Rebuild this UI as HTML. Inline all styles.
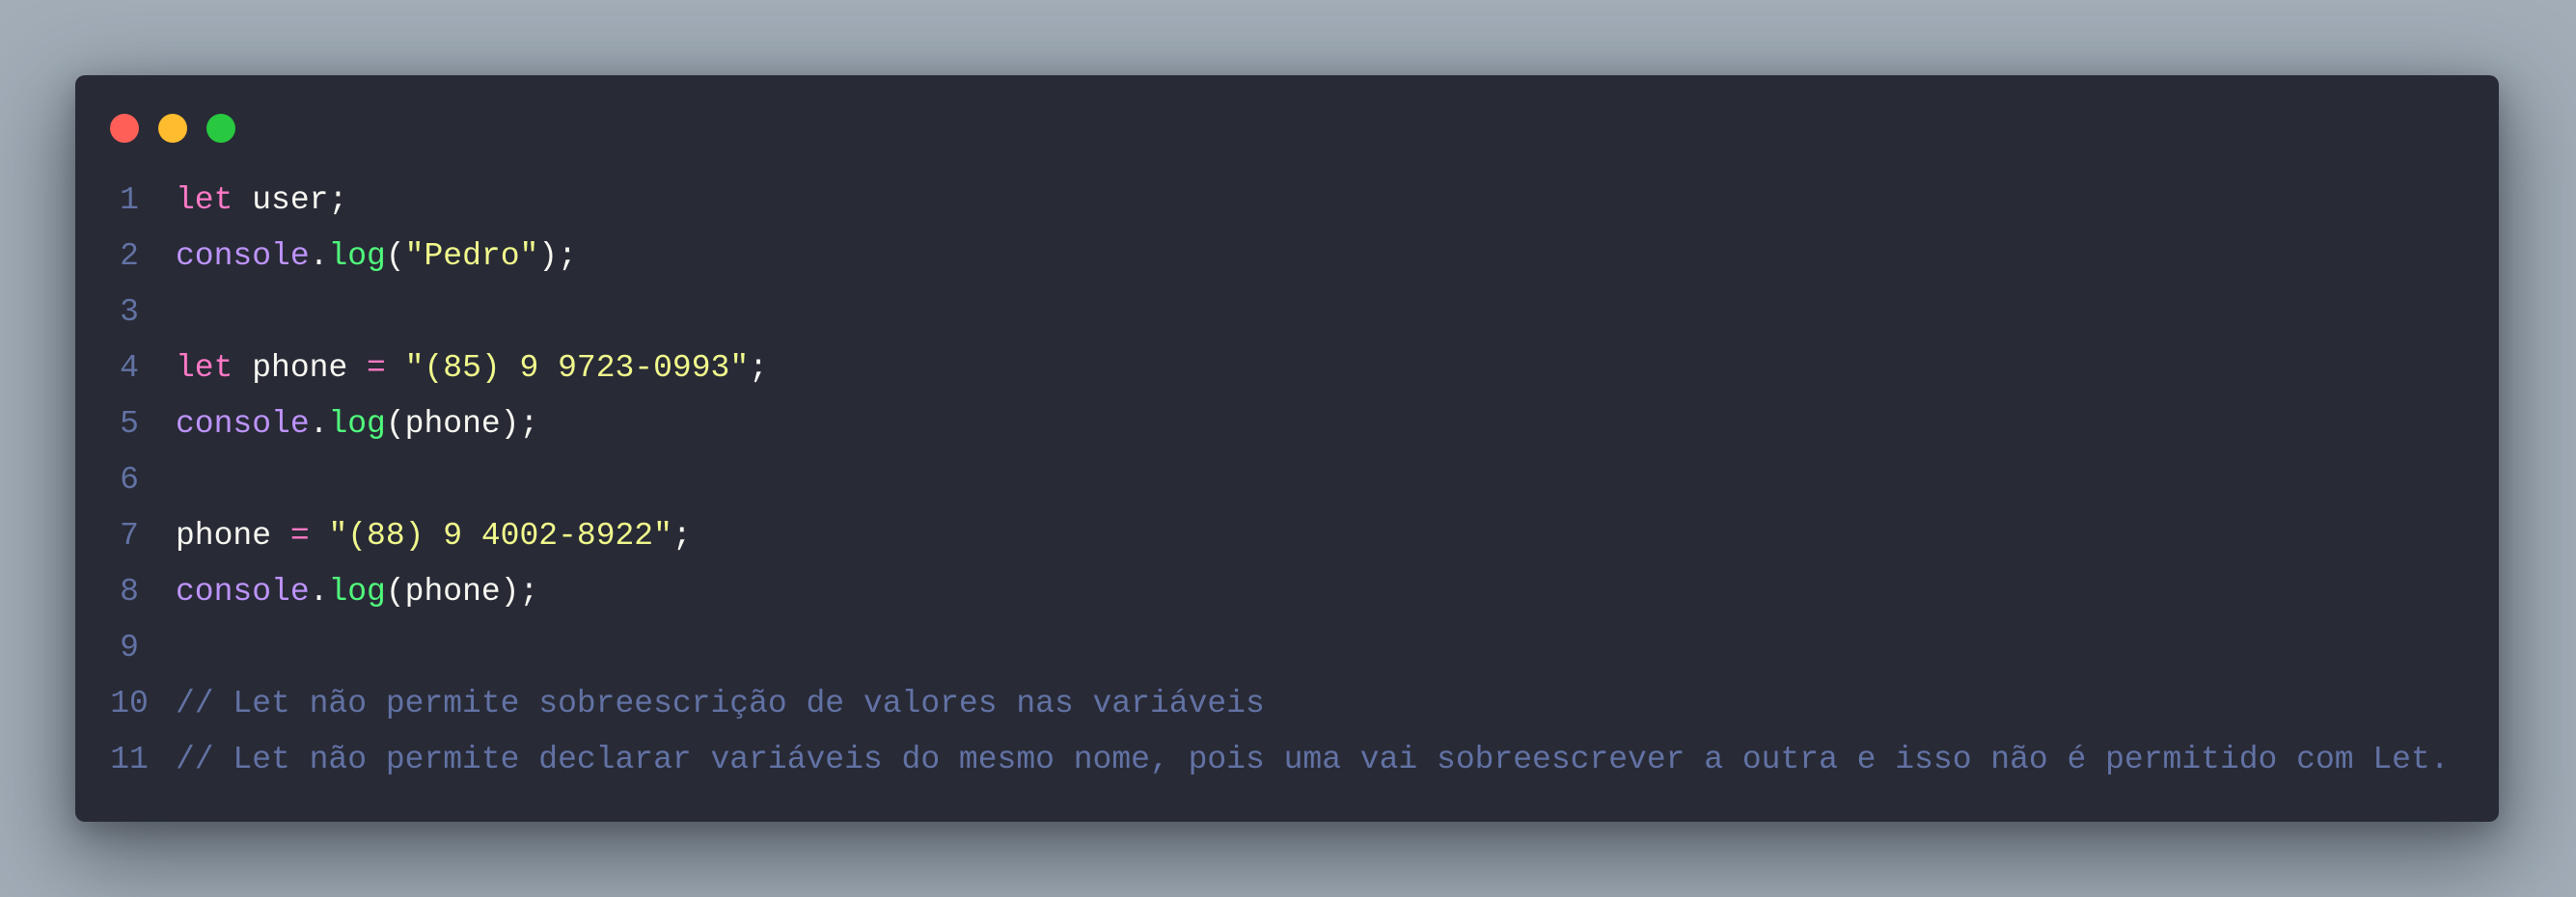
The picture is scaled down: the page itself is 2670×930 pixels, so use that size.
<!DOCTYPE html>
<html><head><meta charset="utf-8"><style>
html,body{margin:0;padding:0;}
body{width:2670px;height:930px;background:#a2adb8;position:relative;overflow:hidden;}
.win{position:absolute;left:78px;top:78px;width:2512px;height:774px;background:#282a36;border-radius:10px;box-shadow:0 30px 90px 10px rgba(40,45,52,0.55),0 10px 30px rgba(40,45,52,0.35);}
.dot{position:absolute;top:40px;width:30px;height:30px;border-radius:50%;}
.code{position:absolute;left:0;top:101px;font-family:"Liberation Mono",monospace;font-size:33px;line-height:58px;white-space:pre;color:#f8f8f2;}
.ln{display:inline-block;width:40px;margin-left:36px;margin-right:28px;text-align:center;color:#6272a4;}
.k{color:#ff79c6}.c{color:#bd93f9}.f{color:#50fa7b}.s{color:#f1fa8c}.m{color:#6272a4}
</style></head><body>
<div class="win">
<div class="dot" style="left:36px;background:#ff5f57"></div>
<div class="dot" style="left:86px;background:#febc2e"></div>
<div class="dot" style="left:136px;background:#28c840"></div>
<div class="code"><div><span class="ln">1</span><span class="k">let</span> user;</div><div><span class="ln">2</span><span class="c">console</span>.<span class="f">log</span>(<span class="s">"Pedro"</span>);</div><div><span class="ln">3</span></div><div><span class="ln">4</span><span class="k">let</span> phone <span class="k">=</span> <span class="s">"(85) 9 9723-0993"</span>;</div><div><span class="ln">5</span><span class="c">console</span>.<span class="f">log</span>(phone);</div><div><span class="ln">6</span></div><div><span class="ln">7</span>phone <span class="k">=</span> <span class="s">"(88) 9 4002-8922"</span>;</div><div><span class="ln">8</span><span class="c">console</span>.<span class="f">log</span>(phone);</div><div><span class="ln">9</span></div><div><span class="ln">10</span><span class="m">// Let não permite sobreescrição de valores nas variáveis</span></div><div><span class="ln">11</span><span class="m">// Let não permite declarar variáveis do mesmo nome, pois uma vai sobreescrever a outra e isso não é permitido com Let.</span></div></div>
</div>
</body></html>
